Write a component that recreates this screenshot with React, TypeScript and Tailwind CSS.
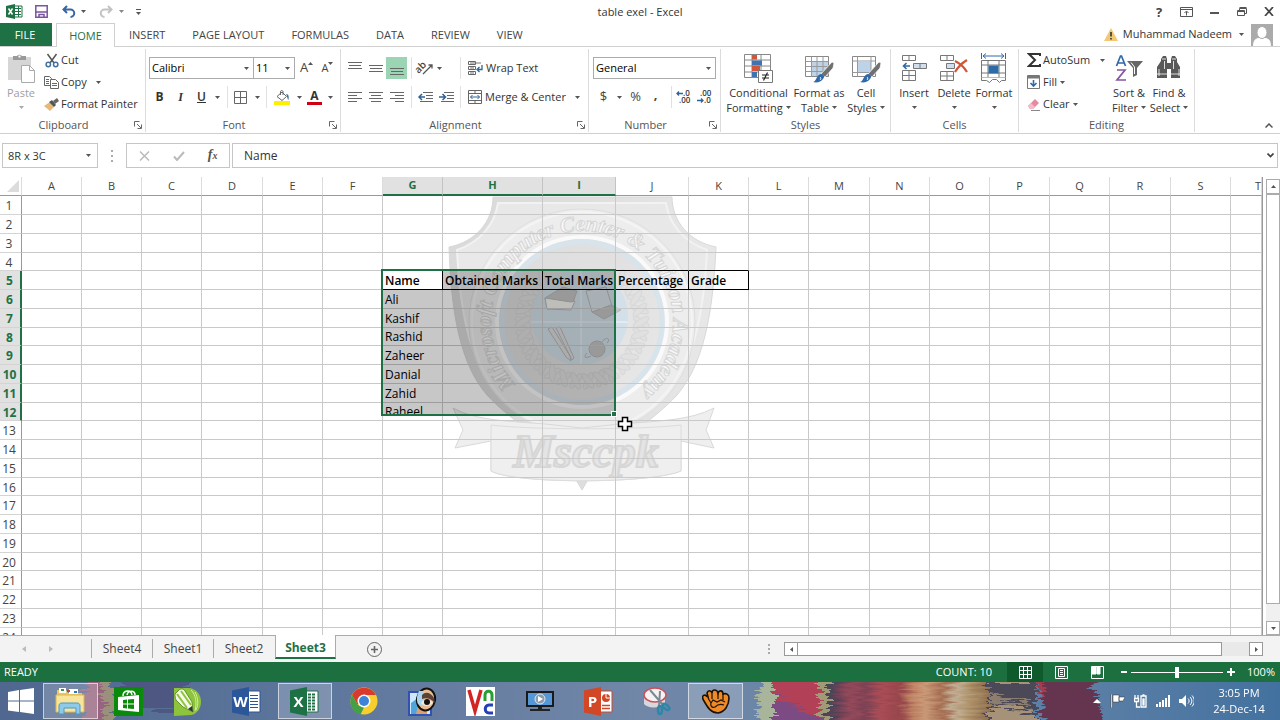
import React from "react";
import clsx from "clsx";

type Kids = { children?: React.ReactNode };

const UI_FONT = "font-['Open_Sans','Noto_Sans',sans-serif]";

const ribbonTabs = ["HOME", "INSERT", "PAGE LAYOUT", "FORMULAS", "DATA", "REVIEW", "VIEW"];

const columns = [
    { name: "A", width: "w-[60px]" },
    { name: "B", width: "w-[60px]" },
    { name: "C", width: "w-[60px]" },
    { name: "D", width: "w-[61px]" },
    { name: "E", width: "w-[60px]" },
    { name: "F", width: "w-[60px]" },
    { name: "G", width: "w-[60px]" },
    { name: "H", width: "w-[100px]" },
    { name: "I", width: "w-[73px]" },
    { name: "J", width: "w-[73px]" },
    { name: "K", width: "w-[60px]" },
    { name: "L", width: "w-[60px]" },
    { name: "M", width: "w-[61px]" },
    { name: "N", width: "w-[60px]" },
    { name: "O", width: "w-[60px]" },
    { name: "P", width: "w-[60px]" },
    { name: "Q", width: "w-[60px]" },
    { name: "R", width: "w-[61px]" },
    { name: "S", width: "w-[60px]" },
    { name: "T", width: "" },
];

const cells: Record<string, string> = {
    G5: "Name",
    H5: "Obtained Marks",
    I5: "Total Marks",
    J5: "Percentage",
    K5: "Grade",
    G6: "Ali",
    G7: "Kashif",
    G8: "Rashid",
    G9: "Zaheer",
    G10: "Danial",
    G11: "Zahid",
    G12: "Raheel",
};

const rows = Array.from({ length: 24 }, (_, i) => i + 1);

function Caret({ className = "" }: { className?: string }) {
    return (
        <svg width="5" height="3" viewBox="0 0 5 3" className={clsx("shrink-0 fill-[#555]", className)}>
            <path d="M0 0h5L2.5 3z" />
        </svg>
    );
}

function Divider() {
    return <span className="w-px h-[22px] bg-[#e1e1e1] shrink-0" />;
}

function Tool({ label, className = "w-[21px]", children }: Kids & { label: string; className?: string }) {
    return (
        <button aria-label={label} className={clsx("h-[22px] flex items-center justify-center shrink-0", className)}>
            {children}
        </button>
    );
}

function Group({ title, className, launcher, children }: Kids & { title: string; className: string; launcher?: boolean }) {
    return (
        <section className={clsx("flex flex-col shrink-0 border-r border-[#dcdcdc] mt-[2px] mb-px", className)}>
            <div className={clsx("flex-1 flex", title === "Clipboard" || title === "Editing" ? "pl-[6px]" : "pl-[3px]")}>{children}</div>
            <div className={clsx("h-[15px] flex items-center justify-center relative text-[11px] leading-[15px] text-[#555]", launcher && "pr-[18px]")}>
                {title}
                {launcher && (
                    <button aria-label={`${title} settings`} className="absolute right-[3px] top-[4px]">
                        <svg width="8" height="8" viewBox="0 0 8 8" fill="none" stroke="#666">
                            <path d="M.5 5.5v-5h5M3 3l4 4M7.500 3.500v4h-4" />
                        </svg>
                    </button>
                )}
            </div>
        </section>
    );
}

function Dropdown({ label, value, className }: { label: string; value: string; className: string }) {
    return (
        <div className={clsx("relative h-[22px] border border-[#ababab] bg-white", className)}>
            <select aria-label={label} defaultValue={value} className="block appearance-none w-full h-[20px] py-0 pl-[2px] text-[11px] leading-[20px] text-black bg-transparent outline-none">
                <option>{value}</option>
            </select>
            <Caret className="absolute right-[4px] top-[9px] pointer-events-none" />
        </div>
    );
}

function BigButton({ lines, className, caretBelow, children }: Kids & { lines: string[]; className: string; caretBelow?: boolean }) {
    return (
        <button className={clsx("flex flex-col items-center text-[11px] leading-[15px] text-[#333] whitespace-nowrap", className)}>
            <span className="h-[32px] mt-[3px] flex items-center justify-center">{children}</span>
            <span className="mt-[1px]">{lines[0]}</span>
            {caretBelow ? (
                <Caret className="mt-[6px]" />
            ) : (
                <span className="flex items-center gap-[3px]">
                    {lines[1]}
                    <Caret />
                </span>
            )}
        </button>
    );
}

function SmallButton({ label, caret, children }: Kids & { label: string; caret?: string }) {
    return (
        <button className="h-[22px] flex items-center text-[11px] text-[#333] whitespace-nowrap">
            <span className="w-[17px] mr-px flex justify-center">{children}</span>
            {label}
            {caret && <Caret className={caret} />}
        </button>
    );
}

/* ---- ribbon icons ---- */

function PasteIcon() {
    return (
        <svg width="28" height="30" viewBox="0 0 28 30">
            <path d="M1 4h23v23H1z" fill="#d6d6d6" />
            <path d="M6 3h4a3 3 0 0 1 5 0h4v4H6z" fill="#999" />
            <path d="M11.500 2.500h2v2h-2z" fill="#fff" />
            <path d="M14.500 12.500h8l5 5v12h-13z" fill="#fff" stroke="#aaa" />
            <path d="M22.500 12.500v5h5" fill="none" stroke="#aaa" />
        </svg>
    );
}

function CutIcon() {
    return (
        <svg width="14" height="15" viewBox="0 0 14 15" fill="none" stroke="#555" strokeWidth="1.500">
            <path d="M2.500 1l6.500 9M11.500 1L5 10" />
            <circle cx="3.300" cy="11.500" r="2.200" stroke="#4472a0" />
            <circle cx="10.700" cy="11.500" r="2.200" stroke="#4472a0" />
        </svg>
    );
}

function CopyIcon() {
    return (
        <svg width="15" height="13" viewBox="0 0 15 13" fill="#fff" stroke="#666">
            <path d="M.5.5h5l2 2v7h-7z" />
            <path d="M2 3.500h3M2 5.500h3M2 7.500h3" stroke="#4472a0" />
            <path d="M6.500 3.500h5l3 3v6h-8z" />
            <path d="M8 7.500h5M8 9.500h5" stroke="#4472a0" />
        </svg>
    );
}

function PainterIcon() {
    return (
        <svg width="15" height="13" viewBox="0 0 15 13">
            <path d="M0 8l6-4 4 5-4 4z" fill="#e8b877" />
            <path d="M5 4l3-2 4 5-2 2z" fill="#555" />
            <path d="M9 3l4-3 2 3-4 3z" fill="#666" />
        </svg>
    );
}

function BorderIcon() {
    return (
        <svg width="13" height="13" viewBox="0 0 13 13" fill="none" stroke="#666">
            <path d="M.5.5h12v12H.5zM6.500.5v12M.5 6.500h12" />
        </svg>
    );
}

function FillColorIcon() {
    return (
        <svg width="16" height="15" viewBox="0 0 16 15">
            <path d="M0 11h16v4H0z" fill="#ffee00" />
            <path d="M3 6.500L8 2l4.500 4.500L8 10.500z" fill="#fff" stroke="#666" />
            <path d="M6.500 5V1.500a1.300 1.300 0 0 1 2.500 0V5" fill="none" stroke="#666" />
            <path d="M12 4c3 0 3 3 2.500 6-1.500-1-1-4-2.500-6z" fill="#3f6fa5" />
        </svg>
    );
}

/* Stack of horizontal rules used by the six alignment buttons. */
function LinesIcon({ lines }: { lines: [number, number, number][] }) {
    return (
        <svg width="14" height="16" viewBox="0 0 14 16" stroke="#666">
            {lines.map(([x1, x2, y]) => (
                <path key={y} d={`M${x1} ${y}.5H${x2}`} />
            ))}
        </svg>
    );
}

function IndentIcon({ right }: { right?: boolean }) {
    return (
        <svg width="15" height="12" viewBox="0 0 15 12" fill="none" stroke="#666">
            <path d="M5 1.500h10M8 4.500h7M8 7.500h7M2 10.500h13" />
            <path d={right ? "M0 6h6M3.500 3L6.500 6l-3 3" : "M7 6H1M4 3L1 6l3 3"} stroke="#2f6496" strokeWidth="1.500" />
        </svg>
    );
}

function OrientationIcon() {
    return (
        <svg width="17" height="16" viewBox="0 0 17 16" className="overflow-visible">
            <text x="-1" y="10" transform="rotate(-45 5 9)" fontSize="10" fontWeight="600" fill="#444" className={UI_FONT}>ab</text>
            <path d="M6 14l9-9M11.500 5H15v3.500" fill="none" stroke="#555" strokeWidth="1.300" />
        </svg>
    );
}

function WrapIcon() {
    return (
        <svg width="15" height="14" viewBox="0 0 15 14" fill="none" stroke="#666">
            <path d="M.5.5h7v3h-7zM.5 5.500h7v3h-7zM.5 10.500h7v3h-7z" />
            <path d="M2 2h11M2 7h4M2 12h4" stroke="#777" />
            <path d="M14 4v4.500h-4M11.500 6L9 8.500l2.500 2.500" stroke="#2f6496" strokeWidth="1.300" />
        </svg>
    );
}

function MergeIcon() {
    return (
        <svg width="14" height="14" viewBox="0 0 14 14" fill="none" stroke="#666">
            <path d="M.5.5h13v13H.5zM.5 3.500h13M.5 10.500h13M7 .5v3M7 10.500v3" />
            <path d="M2.500 7h9M4.500 5l-2 2 2 2M9.500 5l2 2-2 2" stroke="#2f6496" />
        </svg>
    );
}

function DecimalIcon({ down }: { down?: boolean }) {
    return (
        <svg width="15" height="14" viewBox="0 0 15 14" className={clsx("overflow-visible", UI_FONT)} fill="#333" fontWeight="600">
            <text x={down ? 2 : 6} y="6" fontSize="8">{down ? ".00" : ".0"}</text>
            <text x={down ? 6 : 2} y="13" fontSize="8">{down ? ".0" : ".00"}</text>
            <path
                d={down ? "M-1 10.500h6M3 8.500l2 2-2 2" : "M6 3.500H0M2 1.500l-2 2 2 2"}
                fill="none"
                stroke="#2f6496"
                strokeWidth="1.300"
            />
        </svg>
    );
}

function ConditionalIcon() {
    return (
        <svg width="29" height="30" viewBox="0 0 29 30">
            <path d="M.5 1.500h26v23H.5zM8 1.500v23M17 1.500v23M.5 7h26M.5 13h26M.5 19h26" fill="#fff" stroke="#888" />
            <path d="M8 2h5v4.500H8zM8 13h8v5H8z" fill="#d2563a" />
            <path d="M8 7.500h10v5H8zM8 19h5v5H8z" fill="#3f74b0" />
            <path d="M14.500 17.500h14v12h-14z" fill="#fff" stroke="#777" />
            <path d="M18 22h7M18 25h7M23.500 19.500l-4 8" fill="none" stroke="#222" strokeWidth="1.200" />
        </svg>
    );
}

function BrushTableIcon({ cell }: { cell?: boolean }) {
    return (
        <svg width="29" height="30" viewBox="0 0 29 30">
            <path d="M.5 3.500h23v20H.5z" fill="#fff" stroke="#888" />
            <path d={cell ? "M5 9h14v10H5z" : "M7 9h16v14H7z"} fill="#bdd3e8" />
            <path d={cell ? "M.5 8h23M.5 19.500h23M5.500 3.500v20M19 3.500v20" : "M.5 8.500h23M.5 13.500h23M.5 18.500h23M6.500 3.500v20M12 3.500v20M18 3.500v20"} fill="none" stroke="#999" />
            <path d="M27 9l2 1-1 5-8 9-4-3z" fill="#707070" stroke="#fff" strokeWidth=".7" />
            <path d="M8 29c4-1 3-7 8-8 3 0 4 3 2 5-2 3-6 4-10 3z" fill="#2f6aa8" />
            <path d="M15 24c1 1 1 2 0 3" stroke="#fff" fill="none" />
        </svg>
    );
}

function InsertIcon() {
    return (
        <svg width="26" height="28" viewBox="0 0 26 28" fill="#fff" stroke="#777">
            <path d="M1.500 1.500h13v5h-13zM8 1.500v5M1.500 16.500h13v10h-13zM8 16.500v10M1.500 21.500h13" />
            <path d="M12.500 9.500h13v5h-13z" fill="#cfdff0" />
            <path d="M19 9.500v5" />
            <path d="M9 12H2.500M5.500 9l-3 3 3 3" fill="none" stroke="#2f6aa8" strokeWidth="1.600" />
        </svg>
    );
}

function DeleteIcon() {
    return (
        <svg width="28" height="28" viewBox="0 0 28 28" fill="#fff" stroke="#777">
            <path d="M.5 1.500h13v5H.5zM7 1.500v5M.5 17.500h13v9H.5zM7 17.500v9M.5 22h13" />
            <path d="M6.500 9.500h8v5h-8z" fill="#cfdff0" />
            <path d="M15 7c4 2 9 6 12 11M27 6c-5 3-9 7-12 12" fill="none" stroke="#cf5735" strokeWidth="2.200" />
        </svg>
    );
}

function FormatIcon() {
    return (
        <svg width="28" height="30" viewBox="0 0 28 30" fill="#fff" stroke="#777">
            <path d="M1.500 7.500h24v17h-24zM8 7.500v17M19 7.500v17M1.500 12h24M1.500 20h24" />
            <path d="M8.500 12.500h10v8h-10z" fill="#2f6aa8" stroke="none" />
            <path d="M1.500 24.500v3h5l3 2 3-3h4l3 3 2-2h4v-3" />
            <path d="M1.500 0v6M25.500 0v6M3 3h21M6 .5L3 3l3 2.500M21 .5L24 3l-3 2.500" fill="none" stroke="#2f6aa8" />
        </svg>
    );
}

function SortIcon() {
    return (
        <svg width="29" height="28" viewBox="0 0 29 28">
            <path d="M1.500 12L5.500 2h1l4 10M3 9h6" fill="none" stroke="#2f6aa8" strokeWidth="1.700" />
            <path d="M2 16h8L2 26h9" fill="none" stroke="#8455a0" strokeWidth="1.700" />
            <path d="M12 7h16l-6 7v7l-4 2v-9z" fill="#666" />
            <path d="M16 8.500l3.500 4.500v7" fill="none" stroke="#fff" />
        </svg>
    );
}

function BinocularsIcon() {
    return (
        <svg width="26" height="26" viewBox="0 0 26 26" fill="#595959">
            <path d="M5 4l2-3h3l1 3v4h4V4l1-3h3l2 3v3l3 5v11h-9v-9h-4v9H1V12l4-6z" />
            <path d="M3 14v7M8.500 6v8M17.500 6v8M23 14v7M6 4h4M16 4h4M1 19h10M15 19h10" stroke="#fff" strokeWidth=".8" fill="none" />
        </svg>
    );
}

function TitleBar() {
    return (
        <header className="h-[23px] shrink-0 relative flex items-center justify-between text-[11px] text-[#333]">
            <div className="flex items-center pl-[6px]">
                <svg width="17" height="15" viewBox="0 0 17 15">
                    <path d="M8 2h8v11H8z" fill="#fff" stroke="#207245" />
                    <path d="M9 4.500h6M9 7.500h6M9 10.500h6M12.500 2v11" stroke="#207245" />
                    <path d="M0 2l9-2v15l-9-2z" fill="#207245" />
                    <path d="M2.500 4.500l4 6M6.500 4.500l-4 6" stroke="#fff" strokeWidth="1.500" />
                </svg>
                <button aria-label="Save" className="ml-[12px]">
                    <svg width="13" height="13" viewBox="0 0 13 13" fill="none" stroke="#7a559c" strokeWidth="1.500">
                        <path d="M.8.8h11.400v11.400H.8zM1 7h11M4 12V9.500h5V12" />
                    </svg>
                </button>
                <button aria-label="Undo" className="ml-[14px] flex items-center gap-[5px]">
                    <svg width="14" height="13" viewBox="0 0 14 13" fill="none" stroke="#3567a3" strokeWidth="2">
                        <path d="M5 1L1.500 4.500 5 8M2 4.500h6.500a3.500 3.500 0 0 1 0 7.500" />
                    </svg>
                    <Caret />
                </button>
                <button aria-label="Redo" className="ml-[13px] flex items-center gap-[6px] opacity-70">
                    <svg width="14" height="13" viewBox="0 0 14 13" fill="none" stroke="#aaa" strokeWidth="2">
                        <path d="M9 1l3.500 3.500L9 8M12 4.500H5.500a3.500 3.500 0 0 0 0 7.500" />
                    </svg>
                    <Caret />
                </button>
                <button aria-label="Customize Quick Access Toolbar" className="ml-[12px] flex flex-col items-center gap-[2px]">
                    <span className="w-[5px] h-px bg-[#555]" />
                    <Caret />
                </button>
            </div>
            <h1 className="absolute left-1/2 top-[4px] -translate-x-1/2 whitespace-nowrap">table exel - Excel</h1>
            <div className="flex items-center pr-[6px] text-[#444]">
                <button aria-label="Help" className="w-[12px] mr-[15px] text-[13px] font-bold leading-[18px]">?</button>
                <button aria-label="Ribbon display options" className="mr-[17px]">
                    <svg width="13" height="10" viewBox="0 0 13 10" fill="none" stroke="#555">
                        <path d="M.5.5h12v9H.5zM.5 2.500h12M6.500 8.500v-4M4.500 6l2-2 2 2" />
                    </svg>
                </button>
                <button aria-label="Minimize" className="w-[9px] h-[2px] mt-[3px] mr-[18px] bg-[#555]" />
                <button aria-label="Restore" className="mr-[17px]">
                    <svg width="10" height="10" viewBox="0 0 10 10" fill="none" stroke="#555">
                        <path d="M.5 3.500h7v5h-7zM.5 4.500h7M2.500 3.500v-2h7v5h-2M2.500.5h7" />
                    </svg>
                </button>
                <button aria-label="Close">
                    <svg width="10" height="9" viewBox="0 0 10 9" stroke="#444" strokeWidth="1.700">
                        <path d="M1 0l8 9M9 0L1 9" />
                    </svg>
                </button>
            </div>
        </header>
    );
}

function RibbonTabs() {
    return (
        <nav className="h-[24px] shrink-0 flex text-[11px] text-[#444] border-b border-[#d0d0d0]">
            <button className="w-[52px] mr-[4px] pr-[2px] pt-px bg-[#1e7145] text-white">FILE</button>
            {ribbonTabs.map((tab, i) => (
                <button
                    key={tab}
                    className={clsx(
                        "whitespace-nowrap pt-px",
                        i === 0 ? "w-[59px] -mb-px bg-white border border-b-0 border-[#d0d0d0] text-[#1e7145]" : "pl-[14px] pr-[13px]"
                    )}
                >
                    {tab}
                </button>
            ))}
            <div className="ml-auto flex items-center pr-[7px] text-[#333]">
                <svg width="14" height="13" viewBox="0 0 14 13">
                    <path d="M7 0l7 13H0z" fill="#f3c872" />
                    <path d="M7 4v4.500M7 10v1.500" stroke="#333" strokeWidth="1.600" />
                </svg>
                <button className="ml-[5px] flex items-center gap-[7px]">
                    Muhammad Nadeem
                    <Caret />
                </button>
                <svg width="22" height="22" viewBox="0 0 22 22" className="ml-[7px]">
                    <path d="M0 0h22v22H0z" fill="#ababab" />
                    <path d="M2 22c0-6 3-8 6-8h6c3 0 6 2 6 8z" fill="#fff" />
                    <ellipse cx="11" cy="8.500" rx="5" ry="6" fill="#fff" stroke="#ababab" />
                </svg>
            </div>
        </nav>
    );
}

function Ribbon() {
    return (
        <div className="h-[87px] shrink-0 flex border-b border-[#cfcfcf] relative">
            <Group title="Clipboard" className="w-[146px]" launcher>
                <button className="w-[30px] mr-[7px] shrink-0 flex flex-col items-center text-[11px] leading-[15px] text-[#a0a0a0]">
                    <span className="mt-[4px] h-[32px]"><PasteIcon /></span>
                    Paste
                    <Caret className="mt-[6px] opacity-50" />
                </button>
                <div className="flex flex-col">
                    <SmallButton label="Cut"><CutIcon /></SmallButton>
                    <SmallButton label="Copy" caret="ml-[9px]"><CopyIcon /></SmallButton>
                    <SmallButton label="Format Painter"><PainterIcon /></SmallButton>
                </div>
            </Group>

            <Group title="Font" className="w-[195px]" launcher>
                <div className="pt-[8px] flex flex-col gap-[7px]">
                    <div className="flex">
                        <Dropdown label="Font" value="Calibri" className="w-[105px]" />
                        <Dropdown label="Font size" value="11" className="w-[41px] border-l-0" />
                        <Tool label="Increase font size" className="w-[21px] ml-[1px] text-[13px] text-[#444]">
                            A<Caret className="rotate-180 mb-[9px]" />
                        </Tool>
                        <Tool label="Decrease font size" className="w-[21px] text-[11px] text-[#444]">
                            A<Caret className="mb-[9px]" />
                        </Tool>
                    </div>
                    <div className="flex items-center text-[12px] text-[#333]">
                        <Tool label="Bold"><b>B</b></Tool>
                        <Tool label="Italic"><i className="font-['Liberation_Serif',serif] font-bold">I</i></Tool>
                        <Tool label="Underline"><span className="underline font-semibold">U</span></Tool>
                        <Tool label="Underline style" className="w-[11px]"><Caret /></Tool>
                        <span className="w-[4px]" />
                        <Divider />
                        <Tool label="Borders" className="w-[25px]"><BorderIcon /></Tool>
                        <Tool label="Border style" className="w-[9px]"><Caret /></Tool>
                        <span className="w-[4px]" />
                        <Divider />
                        <Tool label="Fill color" className="w-[25px] ml-[2px]"><FillColorIcon /></Tool>
                        <Tool label="Fill color list" className="w-[10px]"><Caret /></Tool>
                        <Tool label="Font color" className="w-[21px]">
                            <span className="w-[15px] h-[15px] text-[12px] leading-[12px] font-bold border-b-3 border-[#d00010]">A</span>
                        </Tool>
                        <Tool label="Font color list" className="w-[10px]"><Caret /></Tool>
                    </div>
                </div>
            </Group>

            <Group title="Alignment" className="w-[248px]" launcher>
                <div className="pt-[8px] flex flex-col gap-[7px]">
                    <div className="flex items-center">
                        <Tool label="Top align"><LinesIcon lines={[[0, 14, 2], [1, 13, 5], [0, 14, 8]]} /></Tool>
                        <Tool label="Middle align"><LinesIcon lines={[[0, 14, 5], [1, 13, 8], [0, 14, 11]]} /></Tool>
                        <Tool label="Bottom align" className="w-[21px] bg-[#9bd5b4]"><LinesIcon lines={[[0, 14, 8], [1, 13, 11], [0, 14, 14]]} /></Tool>
                        <span className="w-[4px]" />
                        <Divider />
                        <Tool label="Orientation" className="w-[35px] gap-[3px]"><OrientationIcon /><Caret /></Tool>
                        <span className="w-[13px]" />
                        <Divider />
                        <button className="h-[22px] ml-[7px] flex items-center gap-[3px] text-[11px] text-[#333]"><WrapIcon />Wrap Text</button>
                    </div>
                    <div className="flex items-center">
                        <Tool label="Align left"><LinesIcon lines={[[0, 14, 3], [0, 9, 6], [0, 14, 9], [0, 9, 12]]} /></Tool>
                        <Tool label="Center"><LinesIcon lines={[[0, 14, 3], [2, 12, 6], [0, 14, 9], [2, 12, 12]]} /></Tool>
                        <Tool label="Align right"><LinesIcon lines={[[0, 14, 3], [5, 14, 6], [0, 14, 9], [5, 14, 12]]} /></Tool>
                        <span className="w-[4px]" />
                        <Divider />
                        <span className="w-[3px]" />
                        <Tool label="Decrease indent"><IndentIcon /></Tool>
                        <Tool label="Increase indent"><IndentIcon right /></Tool>
                        <span className="w-[3px]" />
                        <Divider />
                        <button className="h-[22px] ml-[7px] flex items-center gap-[3px] text-[11px] text-[#333] whitespace-nowrap">
                            <MergeIcon />Merge &amp; Center
                            <Caret className="ml-[6px]" />
                        </button>
                    </div>
                </div>
            </Group>

            <Group title="Number" className="w-[132px]" launcher>
                <div className="pt-[8px] pl-px flex flex-col gap-[7px]">
                    <Dropdown label="Number format" value="General" className="w-[123px]" />
                    <div className="flex items-center text-[13px] text-[#444]">
                        <Tool label="Currency">$</Tool>
                        <Tool label="Currency list" className="w-[11px]"><Caret /></Tool>
                        <Tool label="Percent">%</Tool>
                        <Tool label="Comma style" className="w-[19px]"><span className="font-bold mb-[5px]">,</span></Tool>
                        <span className="w-[6px]" />
                        <Divider />
                        <span className="w-[2px]" />
                        <Tool label="Increase decimal"><DecimalIcon /></Tool>
                        <Tool label="Decrease decimal"><DecimalIcon down /></Tool>
                    </div>
                </div>
            </Group>

            <Group title="Styles" className="w-[170px]">
                <BigButton lines={["Conditional", "Formatting"]} className="w-[69px]"><ConditionalIcon /></BigButton>
                <BigButton lines={["Format as", "Table"]} className="w-[52px]"><BrushTableIcon /></BigButton>
                <BigButton lines={["Cell", "Styles"]} className="w-[42px]"><BrushTableIcon cell /></BigButton>
            </Group>

            <Group title="Cells" className="w-[128px]">
                <BigButton lines={["Insert"]} caretBelow className="w-[40px]"><InsertIcon /></BigButton>
                <BigButton lines={["Delete"]} caretBelow className="w-[40px]"><DeleteIcon /></BigButton>
                <BigButton lines={["Format"]} caretBelow className="w-[40px]"><FormatIcon /></BigButton>
            </Group>

            <Group title="Editing" className="w-[176px]">
                <div className="w-[84px] flex flex-col">
                    <SmallButton label="AutoSum" caret="ml-[10px]">
                        <svg width="14" height="14" viewBox="0 0 14 14" fill="none" stroke="#333" strokeWidth="2"><path d="M13 3V1H2l6 6-6 6h11v-2" /></svg>
                    </SmallButton>
                    <SmallButton label="Fill" caret="ml-[3px]">
                        <svg width="13" height="14" viewBox="0 0 13 14" fill="#fff" stroke="#777">
                            <path d="M.5.5h12v13H.5z" />
                            <path d="M1 2h11" strokeWidth="3" />
                            <path d="M6.500 5v6M3.500 8l3 3 3-3" fill="none" stroke="#2f6aa8" strokeWidth="1.600" />
                        </svg>
                    </SmallButton>
                    <SmallButton label="Clear" caret="ml-[3px]">
                        <svg width="14" height="13" viewBox="0 0 14 13">
                            <path d="M1 8l7-7 4 4-6 6H3z" fill="#e58aa0" />
                            <path d="M1 8l3-3 4 4-2 2H3z" fill="#f3bcc8" />
                            <path d="M4 12.500h9" stroke="#888" />
                        </svg>
                    </SmallButton>
                </div>
                <BigButton lines={["Sort &", "Filter"]} className="w-[40px]"><SortIcon /></BigButton>
                <BigButton lines={["Find &", "Select"]} className="w-[40px]"><BinocularsIcon /></BigButton>
            </Group>

            <button aria-label="Collapse the ribbon" className="absolute right-[7px] bottom-[5px]">
                <svg width="8" height="5" viewBox="0 0 8 5" fill="none" stroke="#555" strokeWidth="1.500"><path d="M.5 4.500L4 1l3.500 3.500" /></svg>
            </button>
        </div>
    );
}

function FormulaBar() {
    return (
        <div className="h-[25px] shrink-0 mt-[9px] mb-[9px] px-[2px] flex text-[12px] text-[#333]">
            <div className="w-[96px] border border-[#c6c6c6] relative">
                <input aria-label="Name box" defaultValue="8R x 3C" className="w-full h-full pl-[5px] text-[11px] outline-none" />
                <Caret className="absolute right-[6px] top-[10px]" />
            </div>
            <div className="w-[28px] flex flex-col items-center justify-center gap-[3px]">
                <span className="size-[2px] bg-[#aaa]" />
                <span className="size-[2px] bg-[#aaa]" />
                <span className="size-[2px] bg-[#aaa]" />
            </div>
            <div className="w-[104px] border border-[#c6c6c6] flex items-center justify-around">
                <button aria-label="Cancel">
                    <svg width="11" height="10" viewBox="0 0 11 10" stroke="#bbb" strokeWidth="1.500"><path d="M1 .5l9 9M10 .5l-9 9" /></svg>
                </button>
                <button aria-label="Enter">
                    <svg width="12" height="10" viewBox="0 0 12 10" fill="none" stroke="#bbb" strokeWidth="2"><path d="M1 5.500L4 9l7-8" /></svg>
                </button>
                <button aria-label="Insert function" className="font-['Liberation_Serif',serif] italic font-bold text-[14px] leading-[20px] text-[#555]">
                    f<span className="text-[10px]">x</span>
                </button>
            </div>
            <div className="flex-1 ml-[2px] border border-[#c6c6c6] relative">
                <input aria-label="Formula bar" defaultValue="Name" className="w-full h-full pl-[11px] text-[12px] outline-none" />
                <svg width="7" height="5" viewBox="0 0 7 5" className="absolute right-[3px] top-[9px]" fill="none" stroke="#444" strokeWidth="1.700"><path d="M.5.5l3 3 3-3" /></svg>
            </div>
        </div>
    );
}

function Crest() {
    return (
        <svg width="290" height="300" viewBox="440 196 290 300" className="absolute left-[440px] top-[19px]">
            <defs>
                <path id="crest-ring" d="M582 413A91 91 0 0 1 582 231A91 91 0 0 1 582 413" />
                <linearGradient id="crest-fill" x1="0" y1="0" x2="1" y2="0">
                    <stop offset="0" stopColor="#dadada" />
                    <stop offset=".5" stopColor="#dedede" />
                    <stop offset="1" stopColor="#e8e8e8" />
                </linearGradient>
                <linearGradient id="crest-inner" x1="0" y1="0" x2="0" y2="1">
                    <stop offset="0" stopColor="#e8e8e8" />
                    <stop offset="1" stopColor="#ececec" />
                </linearGradient>
                <linearGradient id="crest-disc" x1="0" y1="0" x2="1" y2="1">
                    <stop offset="0" stopColor="#dcdcdc" />
                    <stop offset="1" stopColor="#e8e8e8" />
                </linearGradient>
            </defs>
            <path
                d="M493 197H672C672 222 690 242 716 247C713 315 703 365 677 395C650 425 606 445 582 490C558 445 514 425 487 395C461 365 451 315 449 247C475 242 493 222 493 197Z"
                fill="url(#crest-fill)"
                stroke="#d8d8d8"
            />
            <path
                d="M498 203H666C669 224 684 242 707 250C704 312 694 360 670 388C645 415 604 435 582 470C560 435 519 415 494 388C470 360 460 312 457 250C480 242 495 224 498 203Z"
                fill="url(#crest-inner)"
                stroke="#f2f2f2"
                strokeWidth="2"
            />
            <circle cx="582" cy="322" r="113" fill="#ededed" stroke="#dedede" />
            <circle cx="582" cy="322" r="110" fill="none" stroke="#f4f4f4" strokeWidth="2" />
            <circle cx="582" cy="322" r="85" fill="url(#crest-disc)" stroke="#fafafa" strokeWidth="4" />
            <circle cx="582" cy="322" r="80" fill="none" stroke="#d8e4ec" strokeWidth="5" />
            {/* Laurel leaves leave the top of the ring open */}
            <g fill="#e0e0e0" stroke="#d8d8d8">
                {Array.from({ length: 23 }, (_, i) => (
                    <g key={i} transform={`rotate(${i * 12 + 48} 582 322)`}>
                        <ellipse cx="582" cy="261" rx="3" ry="9" transform="rotate(38 582 271)" />
                        <ellipse cx="582" cy="261" rx="3" ry="9" transform="rotate(-38 582 271)" />
                    </g>
                ))}
            </g>
            <circle cx="580" cy="317" r="48" fill="#d3e0ea" />
            <path d="M532 322h96M581 269v96" stroke="#e8eef3" strokeWidth="1.500" />
            <g stroke="#b8b8b8" fill="#c4c4c4">
                <path d="M545 298l18-11 14 4-6 17-24 1z" />
                <path d="M545 298l2 11 24 1 4-9-4 1z" fill="#f3f3ed" />
                <path d="M586 291l20-4 6 19-20 6z" fill="#d8e2ea" />
                <path d="M592 312l19-7 10 5-17 9z" />
                <path d="M548 329l4-2 18 29 1 5-5-4zM556 328l4-1 14 31-2 2z" fill="#ddd" />
                <circle cx="597" cy="349" r="8" />
                <path d="M602 342c5-7 9-2 5 1M591 356c-6 3-8 1-4-3" fill="none" />
            </g>
            <text fontSize="22" fontWeight="700" fontStyle="italic" fill="#f8f8f8" stroke="#d6d6d6" className="font-['Liberation_Serif',serif]">
                <textPath href="#crest-ring" startOffset="51%" textAnchor="middle">Microsoft Computer Center &amp; Tuition Academy</textPath>
            </text>
            <path
                d="M453 408C476 421 510 421 545 424L582 428L620 424C655 421 690 421 714 408L706 430L714 448L681 441V471C650 484 514 484 491 471V441L455 448L463 430Z"
                fill="#efefef"
                stroke="#d9d9d9"
            />
            <path d="M491 425C530 430 640 430 681 425V471C650 484 514 484 491 471Z" fill="#efefef" stroke="#dcdcdc" />
            <text x="586" y="467" textAnchor="middle" fontSize="46" fontWeight="700" fontStyle="italic" fill="#e4e4e4" stroke="#d6d6d6" strokeWidth="2" className="font-['Liberation_Serif',serif]">
                Msccpk
            </text>
        </svg>
    );
}

function Sheet() {
    const inSelection = (col: string) => col === "G" || col === "H" || col === "I";

    return (
        <main className="flex-1 min-h-0 flex">
            <div className="flex-1 relative overflow-hidden border-r border-[#999]">
                <Crest />
                <table className="relative w-full table-fixed border-separate border-spacing-0 text-[12px] leading-[17px] text-black">
                    <thead>
                        <tr className="h-[19px] text-[11px] text-[#444]">
                            <th className="w-[22px] p-0 border-r border-b border-r-[#dcdcdc] border-b-[#999]">
                                <svg width="12" height="12" viewBox="0 0 12 12" className="ml-[7px] fill-[#dcdcdc]"><path d="M12 0v12H0z" /></svg>
                            </th>
                            {columns.map(({ name, width }) => (
                                <th
                                    key={name}
                                    className={clsx(
                                        "p-0 border-r",
                                        width,
                                        name === "T" && "text-right",
                                        inSelection(name)
                                            ? "bg-[#e1e1e1] font-bold text-[#1e7145] border-b-2 border-b-[#1e7145] border-r-[#c3c3c3]"
                                            : "font-normal border-b border-b-[#999] border-r-[#dcdcdc]"
                                    )}
                                >
                                    <div className="h-[17px] leading-[16px]">{name}</div>
                                </th>
                            ))}
                        </tr>
                    </thead>
                    <tbody>
                        {rows.map((row) => (
                            <tr key={row} className="h-[19px] nth-[4n]:h-[18px]">
                                <th
                                    className={clsx(
                                        "p-0 border-b border-b-[#d4d4d4] text-center text-[12px]",
                                        row >= 5 && row <= 12
                                            ? "pr-px bg-[#e1e1e1] font-bold text-[#1e7145] border-r-2 border-r-[#1e7145]"
                                            : "pr-[3px] font-normal text-[#444] border-r border-r-[#999]"
                                    )}
                                >
                                    <div className="h-[16px] leading-[18px]">{row}</div>
                                </th>
                                {columns.map(({ name }) => {
                                    const value = cells[name + row];
                                    const heading = row === 5 && value;
                                    return (
                                        <td
                                            key={name}
                                            className={clsx(
                                                "p-0 pl-[2px] border-r border-b whitespace-nowrap",
                                                heading ? "border-black font-semibold" : "border-[#c9c9c9]",
                                                row === 4 && cells[name + 5] && "border-b-black"
                                            )}
                                        >
                                            {value && (
                                                <div className={clsx("leading-[17px]", row === 12 ? "h-[11px] mb-[6px] overflow-hidden" : "h-[17px]")}>{value}</div>
                                            )}
                                        </td>
                                    );
                                })}
                            </tr>
                        ))}
                    </tbody>
                </table>

                {/* Selected range G5:I12, the active cell stays unshaded */}
                <div className="absolute left-[381px] top-[92px] w-[235px] h-[147px] border-2 border-[#1e7145] flex flex-col">
                    <div className="h-[19px] ml-[60px] bg-black/22" />
                    <div className="flex-1 bg-black/22" />
                    <span className="absolute -right-[3px] -bottom-[3px] size-[6px] bg-[#1e7145] border border-white" />
                </div>
                <svg width="16" height="16" viewBox="0 0 16 16" className="absolute left-[617px] top-[239px]">
                    <path d="M5.500 1.500h5v4h4v5h-4v4h-5v-4h-4v-5h4z" fill="#fff" stroke="#000" strokeWidth="1.500" />
                </svg>
            </div>

            <div className="w-[17px] shrink-0 pl-[3px] flex flex-col">
                <button aria-label="Scroll up" className="h-[15px] mt-[2px] border border-[#ababab] flex items-center justify-center">
                    <Caret className="rotate-180" />
                </button>
                <div className="flex-1 bg-[#f0f0f0]">
                    <div className="h-[96%] bg-white border border-[#ababab]" />
                </div>
                <button aria-label="Scroll down" className="h-[14px] border border-[#ababab] flex items-center justify-center">
                    <Caret />
                </button>
            </div>
        </main>
    );
}

function SheetTabs() {
    return (
        <div className="h-[27px] shrink-0 flex bg-[#f3f3f3] border-t border-[#ababab] text-[12px] text-[#444]">
            <div className="w-[91px] pl-[22px] flex items-center gap-[22px]">
                <button aria-label="Previous sheets"><svg width="5" height="6" viewBox="0 0 5 6" fill="#bbb"><path d="M4 0v6L0 3z" /></svg></button>
                <button aria-label="Next sheets"><svg width="5" height="6" viewBox="0 0 5 6" fill="#bbb"><path d="M0 0v6l4-3z" /></svg></button>
            </div>
            {["Sheet4", "Sheet1", "Sheet2"].map((name) => (
                <button key={name} className="w-[61px] h-[19px] mt-[3px] border-l border-[#ababab]">{name}</button>
            ))}
            <button className="w-[61px] h-[24px] -mt-px pt-[4px] ml-px bg-white border-x border-[#ababab] border-b-2 border-b-[#1e7145] font-bold text-[#1e7145]">Sheet3</button>
            <button aria-label="New sheet" className="ml-[31px]">
                <svg width="15" height="15" viewBox="0 0 15 15" fill="none" stroke="#666">
                    <circle cx="7.500" cy="7.500" r="7" />
                    <path d="M7.500 4v7M4 7.500h7" strokeWidth="1.600" />
                </svg>
            </button>
            <div className="ml-auto mr-[17px] flex items-center">
                <div className="mr-[14px] flex flex-col gap-[2px]">
                    <span className="size-[2px] bg-[#aaa]" />
                    <span className="size-[2px] bg-[#aaa]" />
                    <span className="size-[2px] bg-[#aaa]" />
                </div>
                <button aria-label="Scroll left" className="w-[14px] h-[14px] bg-white border border-[#999] flex items-center justify-center">
                    <Caret className="rotate-90" />
                </button>
                <div className="w-[36vw] max-w-[451px] h-[14px] bg-[#e9e9e9]">
                    <div className="w-[94%] h-full bg-white border border-l-0 border-[#999]" />
                </div>
                <button aria-label="Scroll right" className="w-[14px] h-[14px] bg-white border border-[#999] flex items-center justify-center">
                    <Caret className="-rotate-90" />
                </button>
            </div>
        </div>
    );
}

function StatusBar() {
    return (
        <div className="h-[20px] shrink-0 pl-[4px] pr-[5px] flex items-center bg-[#1c703f] text-[11px] text-white">
            <span>READY</span>
            <span className="ml-auto mr-[15px]">COUNT: 10</span>
            <button aria-label="Normal view" className="w-[36px] h-full bg-[#0f5a2c] flex items-center justify-center">
                <svg width="13" height="13" viewBox="0 0 13 13" fill="none" stroke="#fff"><path d="M.5.5h12v12H.5zM4.500.5v12M8.500.5v12M.5 4.500h12M.5 8.500h12" /></svg>
            </button>
            <button aria-label="Page layout view" className="w-[36px] h-full flex items-center justify-center">
                <svg width="13" height="13" viewBox="0 0 13 13" fill="none" stroke="#fff"><path d="M.5.5h12v12H.5zM3.500 2.500h6v8h-6zM5 4.500h3M5 6.500h3M5 8.500h3" /></svg>
            </button>
            <button aria-label="Page break preview" className="w-[36px] h-full flex items-center justify-center">
                <svg width="13" height="13" viewBox="0 0 13 13" fill="none" stroke="#fff"><path d="M.5.5h12v12H.5z" /><path d="M1 1h4v7H1zM6 1h3v7H6z" fill="#fff" /></svg>
            </button>
            <button aria-label="Zoom out" className="w-[6px] h-[2px] ml-[6px] mr-[4px] bg-white" />
            <input
                type="range"
                aria-label="Zoom"
                min="10"
                max="190"
                defaultValue="100"
                className="w-[92px] h-px appearance-none bg-white [&::-webkit-slider-thumb]:appearance-none [&::-webkit-slider-thumb]:w-[4px] [&::-webkit-slider-thumb]:h-[11px] [&::-webkit-slider-thumb]:bg-white"
            />
            <button aria-label="Zoom in" className="ml-[4px] mr-[12px]">
                <svg width="8" height="8" viewBox="0 0 8 8" stroke="#fff" strokeWidth="2"><path d="M4 0v8M0 4h8" /></svg>
            </button>
            <span>100%</span>
        </div>
    );
}

/* ---- taskbar ---- */

function OfficeIcon({ color, letter, children }: Kids & { color: string; letter: string }) {
    return (
        <svg width="29" height="29" viewBox="0 0 29 29">
            <path d="M14 4h14v21H14z" fill="#fff" stroke={color} />
            {children}
            <path d="M0 3.500L17 0v29L0 25.500z" fill={color} />
            <text x="8.500" y="20" textAnchor="middle" fontSize="15" fontWeight="700" fill="#fff" className={UI_FONT}>{letter}</text>
        </svg>
    );
}

const apps: { name: string; active?: boolean; icon: React.ReactNode }[] = [
    {
        name: "File Explorer",
        active: true,
        icon: (
            <svg width="30" height="28" viewBox="0 0 30 28">
                <path d="M2 3h9l2 3h14v19H2z" fill="#e9c765" />
                <path d="M4 1h7v5H4zM14 2h9v5h-9z" fill="#fff" />
                <path d="M6 2h3v2H6z" fill="#31994c" />
                <path d="M12 3h3v2h-3z" fill="#d53c2e" />
                <path d="M19 4h3v2h-3z" fill="#2c78c8" />
                <path d="M1 8h28v17H1z" fill="#f9e49b" stroke="#dcb850" />
                <path d="M4 27v-8c0-2 1-3 3-3h15c2 0 3 1 3 3v8h-4v-6H9v6z" fill="#8ecbea" stroke="#4a98c9" />
            </svg>
        ),
    },
    {
        name: "Store",
        icon: (
            <svg width="29" height="29" viewBox="0 0 29 29">
                <path d="M0 0h29v29H0z" fill="#0a8a0a" />
                <path d="M4 10l21-2v17l-21-2z" fill="#fff" />
                <path d="M9 9c0-6 8-7 9-1M13 8c1-5 8-5 8 0" fill="none" stroke="#fff" strokeWidth="1.500" />
                <path d="M9 13l4-.5v4H9zM14 12.500l6-.5v4.500h-6zM9 17.500h4v4L9 21zM14 17.500h6V22l-6-.5z" fill="#0a8a0a" />
            </svg>
        ),
    },
    {
        name: "CorelDRAW",
        icon: (
            <svg width="28" height="29" viewBox="0 0 28 29">
                <path d="M0 1h15c8 1 12 7 12 14 0 6-4 12-10 13L0 29z" fill="#8dc43c" />
                <path d="M1 7l4-4c2-2 5-1 6 1l7 11 1 10-10-5L2 13c-1-2-1-4-1-6z" fill="#f4f8e4" stroke="#5f942a" />
                <path d="M3 7l10 14M7 4l10 14" stroke="#8dc43c" strokeWidth="2" />
                <path d="M14 22l5 3-1-6z" fill="#333" />
                <path d="M17 3c5 5 6 13 4 21M21 5c3 6 4 12 1 18" stroke="#d6eba0" fill="none" />
            </svg>
        ),
    },
    { name: "Word", icon: <OfficeIcon color="#2b579a" letter="W"><path d="M18 8.500h8M18 11.500h8M18 14.500h8M18 17.500h8M18 20.500h8" stroke="#2b579a" /></OfficeIcon> },
    {
        name: "Excel",
        active: true,
        icon: <OfficeIcon color="#1e7145" letter="X"><path d="M18 7.500h8M18 10.500h8M18 13.500h8M18 16.500h8M18 19.500h8M18 22.500h8" stroke="#1e7145" strokeWidth="2" strokeDasharray="3 1" /></OfficeIcon>,
    },
    {
        name: "Chrome",
        icon: (
            <svg width="28" height="28" viewBox="0 0 28 28">
                <circle cx="14" cy="14" r="13.500" fill="#f6cf2e" />
                <path d="M14 14L7.500 17.500 2 8A13.500 13.500 0 0 1 26 8H14z" fill="#d93a2d" />
                <path d="M2 8l6 10 6 2.500-3.500 7A13.500 13.500 0 0 1 2 8z" fill="#43a047" />
                <circle cx="14" cy="14" r="6.500" fill="#fff" />
                <circle cx="14" cy="14" r="5" fill="#3f83d8" />
            </svg>
        ),
    },
    {
        name: "Picture viewer",
        icon: (
            <svg width="29" height="29" viewBox="0 0 29 29">
                <path d="M1 5h22v23H1z" fill="#cfe8fb" stroke="#3350b5" strokeWidth="2" />
                <path d="M3 16l7-5 6 16H3z" fill="#4fa4da" />
                <path d="M11 14l8 4v9H8z" fill="#d9a070" />
                <ellipse cx="18" cy="12.500" rx="9" ry="11" fill="#e9bc90" stroke="#111" strokeWidth="2" transform="rotate(12 18 12.500)" />
                <path d="M11 4h5l-2 16-4-3c-2-4-1-9 1-13z" fill="#a9d4ee" />
                <path d="M14 8c4-4 9-2 12 3l1 5c-4-4-8-6-13-4z" fill="#5a4238" />
                <path d="M13 16c3-5 8-5 12 0-4 4-9 4-12 0z" fill="#f4e6d8" />
                <circle cx="19" cy="15" r="3" fill="#111" />
            </svg>
        ),
    },
    {
        name: "VNC Viewer",
        icon: (
            <svg width="29" height="29" viewBox="0 0 29 29" fill="none" strokeWidth="3">
                <path d="M0 0h29v29H0z" fill="#fff" />
                <path d="M3 3l6 21 6-21" stroke="#d32424" strokeWidth="3.500" />
                <path d="M19 14V8c0-5 7-5 7 0v6" stroke="#2a9d35" />
                <path d="M27 18h-4c-5 0-5 8 0 8h4" stroke="#2440b8" />
            </svg>
        ),
    },
    {
        name: "Media player",
        icon: (
            <svg width="28" height="22" viewBox="0 0 28 22">
                <path d="M0 1h28v16H0z" fill="#1a1a1a" />
                <path d="M2 3h24v12H2z" fill="#5597d7" />
                <path d="M12 17h4v2h5v1H7v-1h5zM4 19h20v2H4z" fill="#222" />
                <circle cx="14" cy="9" r="5" fill="#8b9aab" stroke="#dfe8f0" />
                <path d="M12 6l5 3-5 3z" fill="#fff" />
            </svg>
        ),
    },
    {
        name: "PowerPoint",
        icon: <OfficeIcon color="#d24726" letter="P"><circle cx="22" cy="11" r="4" fill="#d24726" /><path d="M22 11V6M22 11h5" stroke="#fff" /><path d="M18 18.500h8M18 21.500h8" stroke="#d24726" strokeWidth="1.500" /></OfficeIcon>,
    },
    {
        name: "Snipping Tool",
        icon: (
            <svg width="28" height="29" viewBox="0 0 28 29" fill="none">
                <path d="M1 9v8c4 5 16 4 21 0V8z" fill="#d8d8dc" />
                <ellipse cx="12" cy="8" rx="11" ry="7" fill="#f4f2f2" stroke="#c9505a" strokeWidth="1.500" />
                <path d="M7 3l14 16M17 4l-1 16" stroke="#7c8894" strokeWidth="2" />
                <ellipse cx="17" cy="23" rx="2" ry="4" stroke="#2f86a8" strokeWidth="2.500" />
                <ellipse cx="23" cy="20" rx="2" ry="4" stroke="#2f86a8" strokeWidth="2.500" transform="rotate(-50 23 20)" />
            </svg>
        ),
    },
    {
        name: "Screen recorder",
        active: true,
        icon: (
            <svg width="28" height="25" viewBox="0 0 28 25">
                <path
                    d="M2 12c-2-3-2-6 1-6l3 2-1-4c1-3 4-3 5 0 0-4 5-4 6 0 1-3 5-3 5 1 3-1 6 0 6 4 0 7-4 14-11 15-8 0-11-7-14-12z"
                    fill="#f08a24"
                    stroke="#1a1208"
                    strokeWidth="1.600"
                />
                <path d="M10 4v6M16 4v6M21 5v6M6 9l3 5 2-3 4 2 4-2 4 2M9 14c-1 3 1 5 4 4 3-3 6-3 9-2" stroke="#1a1208" strokeWidth="1.200" fill="none" />
            </svg>
        ),
    },
];

function Wallpaper() {
    return (
        <svg viewBox="0 0 1280 38" preserveAspectRatio="none" className="absolute inset-0 w-full h-full">
            <defs>
                <filter id="ripple" x="0" y="0" width="100%" height="100%">
                    <feTurbulence type="fractalNoise" baseFrequency=".03 .35" numOctaves="4" seed="4" />
                    <feDisplacementMap in="SourceGraphic" scale="24" xChannelSelector="R" yChannelSelector="B" />
                    <feGaussianBlur stdDeviation=".7" />
                </filter>
                <linearGradient id="water">
                    <stop offset="0" stopColor="#50688f" />
                    <stop offset=".2" stopColor="#5a7399" />
                    <stop offset=".5" stopColor="#7187a8" />
                    <stop offset=".85" stopColor="#5b7fa6" />
                    <stop offset="1" stopColor="#43719f" />
                </linearGradient>
                <linearGradient id="hulls" gradientUnits="userSpaceOnUse" x1="834" y1="0" x2="990" y2="0">
                    <stop offset="0" stopColor="#5f4056" />
                    <stop offset=".12" stopColor="#96485a" />
                    <stop offset=".2" stopColor="#7c4255" />
                    <stop offset=".3" stopColor="#ab4d55" />
                    <stop offset=".42" stopColor="#97464c" />
                    <stop offset=".5" stopColor="#bd8163" />
                    <stop offset=".58" stopColor="#c99a78" />
                    <stop offset=".7" stopColor="#a56d52" />
                    <stop offset=".78" stopColor="#c0ae94" />
                    <stop offset=".88" stopColor="#ad9067" />
                    <stop offset="1" stopColor="#8c6d50" />
                </linearGradient>
            </defs>
            <path d="M0 0h1280v38H0z" fill="url(#water)" />
            <g filter="url(#ripple)">
                <path d="M0 0h1280v38H0z" fill="none" />
                <path d="M84 -20h18v78H84z" fill="#a8617a" opacity=".8" />
                <path d="M102 -20h12v78h-12z" fill="#9a907c" />
                <path d="M127 -20h60v50h-60z" fill="#4a4a75" opacity=".6" />
                <path d="M762 -20h12v78h-16z" fill="#a9b59b" />
                <path d="M773 -20h48v60l-48-22z" fill="#b23f56" />
                <path d="M773 16l48 18v24h-48z" fill="#7b4c83" />
                <path d="M818 -20h14v78h-14z" fill="#a09a76" />
                <path d="M828 -20h10v78h-10z" fill="#4c4458" />
                <path d="M834 -20h156v78H834z" fill="url(#hulls)" />
                <path d="M988 -20h48v78h-48z" fill="#4c4858" />
                <path d="M990 -8h40v6h-40zM990 22l45 8v28h-45z" fill="#a69279" />
                <path d="M990 12l40 10v4l-40-6z" fill="#8c7f70" />
                <path d="M1028 -20h26l-6 50z" fill="#a33c4f" />
                <path d="M1046 -20h40l24 78h-70z" fill="#653450" />
            </g>
        </svg>
    );
}

function Taskbar() {
    return (
        <footer className="h-[38px] shrink-0 relative overflow-hidden flex items-stretch text-white">
            <Wallpaper />
            <button aria-label="Start" className="relative w-[41px] flex items-center justify-center">
                <svg width="26" height="26" viewBox="0 0 26 26" fill="#fff"><path d="M0 4l11-2v10.500H0zM12 2l14-2v12.500H12zM0 13.500h11V24L0 22.500zM12 13.500h14V26l-14-2z" /></svg>
            </button>
            <div className="relative w-[704px] grid grid-cols-12">
                {apps.map(({ name, active, icon }) => (
                    <button
                        key={name}
                        aria-label={name}
                        className={clsx("mx-[2px] my-px flex items-center justify-center", active && "border border-white/60 bg-white/20")}
                    >
                        {icon}
                    </button>
                ))}
            </div>
            <div className="relative ml-auto mr-[13px] flex items-center gap-[9px]">
                <svg width="8" height="4" viewBox="0 0 8 4" fill="#fff"><path d="M4 0l4 4H0z" /></svg>
                <svg width="15" height="14" viewBox="0 0 15 14" fill="#fff" stroke="#333" strokeWidth=".5"><path d="M1 0h1.500v14H1zM3 1h6v7H3zM9 3h6l-2 4H9z" /></svg>
                <svg width="13" height="14" viewBox="0 0 13 14" fill="none" stroke="#fff" strokeWidth="1.300"><path d="M7 2h5v11H7zM8.500 1h2M1 1v3M4 1v3M.5 4.500h4v3h-4zM2.500 7v6H6" /><path d="M9 5h1v6H9z" fill="#fff" /></svg>
                <svg width="14" height="12" viewBox="0 0 14 12" fill="#fff"><path d="M0 9h2v3H0zM3 7h2v5H3zM6 5h2v7H6zM9 3h2v9H9zM12 0h2v12h-2z" /></svg>
                <svg width="15" height="12" viewBox="0 0 15 12" fill="#fff"><path d="M0 4h3l4-4v12L3 8H0z" /><path d="M9 3.500c1.500 1.500 1.500 3.500 0 5M11 2c2.500 2.500 2.500 5.500 0 8M13 .5c3 3.500 3 7.500 0 11" fill="none" stroke="#fff" /></svg>
                <div className="w-[56px] ml-[8px] text-center text-[11px] leading-[16px] whitespace-nowrap">
                    <div>3:05 PM</div>
                    <div>24-Dec-14</div>
                </div>
            </div>
        </footer>
    );
}

export default function App() {
    return (
        <div className={clsx("h-screen flex flex-col overflow-hidden bg-white", UI_FONT)}>
            <TitleBar />
            <RibbonTabs />
            <Ribbon />
            <FormulaBar />
            <Sheet />
            <SheetTabs />
            <StatusBar />
            <Taskbar />
        </div>
    );
}
